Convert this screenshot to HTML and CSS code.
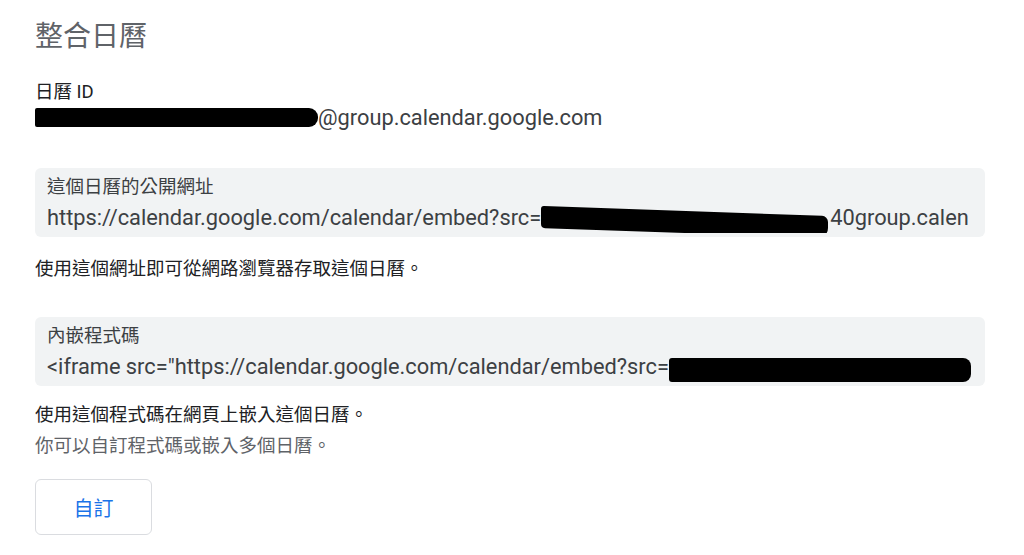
FILE: index.html
```html
<!DOCTYPE html>
<html lang="zh-Hant">
<head>
<meta charset="utf-8">
<title>整合日曆</title>
<link rel="stylesheet" href="styles.css">
</head>
<body>
<main class="page">
  <h1 class="title">整合日曆</h1>

  <div class="field">
    <div class="field-label">日曆 ID</div>
    <div class="field-value"><span class="redact redact-id"></span>@group.calendar.google.com</div>
  </div>

  <div class="box box-first">
    <div class="box-label">這個日曆的公開網址</div>
    <div class="box-value">https://calendar.google.com/calendar/embed?src=<span class="redact redact-url"></span>40group.calen</div>
  </div>
  <p class="note note-after-url">使用這個網址即可從網路瀏覽器存取這個日曆。</p>

  <div class="box box-second">
    <div class="box-label">內嵌程式碼</div>
    <div class="box-value">&lt;iframe src="https://calendar.google.com/calendar/embed?src=<span class="redact redact-code"></span></div>
  </div>
  <p class="note note-after-code">使用這個程式碼在網頁上嵌入這個日曆。</p>
  <p class="hint">你可以自訂程式碼或嵌入多個日曆。</p>

  <button class="btn" type="button">自訂</button>
</main>
</body>
</html>
```

FILE: styles.css
```css
* { box-sizing: border-box; }
html, body { margin: 0; padding: 0; background: #ffffff; }
body {
  font-family: Roboto, "Noto Sans CJK TC", "Noto Sans", sans-serif;
  color: #202124;
}
.page {
  padding: 19px 0 0 35px;
  width: 985px;
}
.title {
  margin: 0;
  font-size: 28px;
  line-height: 36px;
  font-weight: 400;
  color: #5f6368;
}
.field { margin-top: 25px; }
.field-label {
  font-size: 18.5px;
  line-height: 24px;
  color: #202124;
}
.field-value {
  font-size: 21.8px;
  line-height: 28px;
  color: #3c4043;
  white-space: nowrap;
}
.redact {
  display: inline-block;
  background: #000;
  vertical-align: middle;
}
.redact-id { width: 283px; height: 19px; border-radius: 2px 9px 9px 2px; margin-top: -4px; }
.redact-url { width: 287px; height: 22px; margin: 6px 2px 0 0; border-radius: 3px 6px 10px 4px; transform: skewY(2deg); }
.redact-code { width: 302px; height: 24px; margin: 4px 0 0 0; border-radius: 3px 8px 8px 3px; }
.box {
  width: 950px;
  background: #f1f3f4;
  border-radius: 6px;
  padding: 7px 10px 4px 12px;
  overflow: hidden;
}
.box-first { margin-top: 36px; }
.box-second { margin-top: 35px; }
.box-label {
  font-size: 18.5px;
  line-height: 24px;
  color: #3c4043;
}
.box-value {
  margin-top: 5px;
  font-size: 21.8px;
  line-height: 28px;
  color: #3c4043;
  white-space: nowrap;
  overflow: hidden;
}
.note {
  margin: 0;
  font-size: 18.5px;
  line-height: 26px;
  color: #202124;
}
.note-after-url { margin-top: 19px; }
.note-after-code { margin-top: 16px; }
.hint {
  margin: 5px 0 0 0;
  font-size: 18.5px;
  line-height: 26px;
  color: #5f6368;
}
.btn {
  display: block;
  margin-top: 20px;
  width: 117px;
  height: 56px;
  background: #fff;
  border: 1px solid #dadce0;
  border-radius: 6px;
  color: #1a73e8;
  font-family: Roboto, "Noto Sans CJK TC", sans-serif;
  font-size: 20px;
  padding: 0;
}
```
